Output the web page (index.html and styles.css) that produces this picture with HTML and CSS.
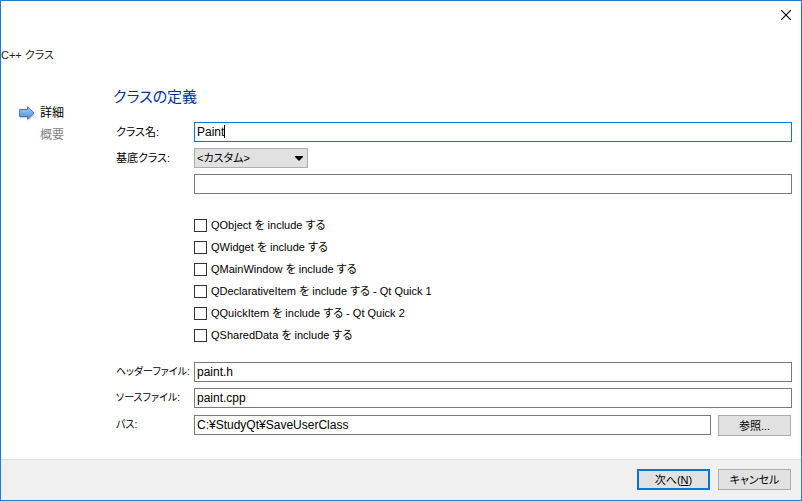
FILE: index.html
```html
<!DOCTYPE html>
<html lang="ja">
  <head>
    <meta charset="UTF-8" />
    <meta name="viewport" content="width=device-width, initial-scale=1.0" />
    <title>C++ クラス</title>
    <link rel="stylesheet" href="styles.css">
  </head>
  <body>
    <form class="wizard">
      <header class="titleBar">
        <button type="button" class="closeBtn" aria-label="閉じる">
          <svg width="10" height="10" viewBox="0 0 10 10"><path d="M0 0L10 10M10 0L0 10" stroke="#000" stroke-width="1.1" /></svg>
        </button>
      </header>
      <p class="wizardName">C++ クラス</p>

      <div class="content">
        <ol class="steps">
          <li class="step current">
            <svg class="arrow" width="17" height="15" viewBox="0 0 17 15">
              <defs>
                <linearGradient id="arrowFill" x1="0" y1="0" x2="0" y2="1">
                  <stop offset="0" stop-color="#b0d4fa" />
                  <stop offset="1" stop-color="#4289dc" />
                </linearGradient>
              </defs>
              <path d="M2 5H10V2L17 8.500L10 15V12H2Z" fill="#ccc" />
              <path d="M1.500 3.500H9.500V.8L16 7L9.500 13.200V10.500H1.500Z" fill="url(#arrowFill)" stroke="#4b78b5" />
            </svg>
            詳細
          </li>
          <li class="step">概要</li>
        </ol>

        <main class="page">
          <h1 class="heading">クラスの定義</h1>
          <div class="fields">
            <label for="className">クラス名:</label>
            <div class="focusBox">
              <input type="text" id="className" class="text focused" value="Paint" />
              <span class="caret"></span>
            </div>

            <label for="baseClass">基底クラス:</label>
            <div class="selectBox">
              <select id="baseClass" class="select"><option>&lt;カスタム&gt;</option></select>
              <svg class="selectArrow" width="8" height="5" viewBox="0 0 8 5"><path d="M0 0H8V1L4 5L0 1Z" /></svg>
            </div>
            <input type="text" class="text customBase" aria-label="基底クラス名" />
          </div>

          <div class="includes">
            <label class="check"><input type="checkbox" />QObject を include する</label>
            <label class="check"><input type="checkbox" />QWidget を include する</label>
            <label class="check"><input type="checkbox" />QMainWindow を include する</label>
            <label class="check"><input type="checkbox" />QDeclarativeItem を include する - Qt Quick 1</label>
            <label class="check"><input type="checkbox" />QQuickItem を include する - Qt Quick 2</label>
            <label class="check"><input type="checkbox" />QSharedData を include する</label>
          </div>

          <div class="fields files">
            <label for="header">ヘッダーファイル:</label>
            <input type="text" id="header" class="text" value="paint.h" />
            <label for="source">ソースファイル:</label>
            <input type="text" id="source" class="text" value="paint.cpp" />
            <label for="path">パス:</label>
            <div class="pathRow">
              <input type="text" id="path" class="text" value="C:¥StudyQt¥SaveUserClass" />
              <button type="button" class="btn">参照...</button>
            </div>
          </div>
        </main>
      </div>

      <footer class="footer">
        <button type="button" class="btn default">次へ(<u>N</u>)</button>
        <button type="button" class="btn">キャンセル</button>
      </footer>
    </form>
  </body>
</html>
```
FILE: styles.css
```css
* {
  box-sizing: border-box;
}
body {
  margin: 0;
}
body,
input,
select,
button {
  font-family: "Liberation Sans", "Noto Sans CJK JP", sans-serif;
  font-size: 12px;
  line-height: 18px;
  font-feature-settings: "palt";
  color: #000;
}
.wizard {
  display: flex;
  flex-direction: column;
  min-height: 100vh;
  border: 1px solid #1a7fd4;
  background: #fff;
}
.titleBar {
  display: flex;
  justify-content: flex-end;
  padding: 4px 5px;
}
.closeBtn {
  display: flex;
  align-items: center;
  justify-content: center;
  width: 20px;
  height: 20px;
  padding: 0;
  border: none;
  background: none;
}
.wizardName {
  margin: 17px 0 0;
  font-size: 11px;
  color: #222;
}
.content {
  display: flex;
  flex: 1;
  padding: 22px 9px 22px 17px;
}
.steps {
  width: 95px;
  margin: 0;
  padding: 16px 0 0;
  list-style: none;
}
.step {
  display: flex;
  align-items: center;
  height: 22px;
  padding-left: 22px;
  color: #838383;
}
.step.current {
  gap: 5px;
  padding-left: 0;
  color: #000;
}
.page {
  flex: 1;
  min-width: 0;
}
.heading {
  margin: 0 0 14px;
  font-size: 15px;
  font-weight: 400;
  line-height: 22px;
  color: #003399;
}
.fields {
  display: grid;
  grid-template-columns: 78px 1fr;
  row-gap: 6px;
  align-items: center;
  padding-left: 3px;
}
.fields label {
  font-size: 11px;
  white-space: nowrap;
}
.files label {
  font-size: 10px;
}
.text {
  display: block;
  width: 100%;
  height: 20px;
  padding: 0 2px;
  border: 1px solid #7a7a7a;
  border-radius: 0;
  background: #fff;
  outline: none;
}
.text.focused {
  border-color: #0078d7;
}
.focusBox,
.selectBox {
  position: relative;
}
.caret {
  position: absolute;
  top: 3px;
  left: 30px;
  width: 1px;
  height: 13px;
  background: #000;
}
.selectBox {
  width: 114px;
}
.select {
  display: block;
  width: 100%;
  height: 20px;
  padding: 0 2px;
  border: 1px solid #adadad;
  border-radius: 0;
  background: #e1e1e1;
  font-size: 11px;
  appearance: none;
}
.selectArrow {
  position: absolute;
  top: 8px;
  right: 5px;
  pointer-events: none;
}
.customBase {
  grid-column: 2;
}
.includes {
  display: flex;
  flex-direction: column;
  align-items: flex-start;
  padding: 20px 0 16px 81px;
}
.check {
  display: flex;
  align-items: center;
  gap: 4px;
  height: 22px;
  font-size: 11px;
}
.check input {
  width: 13px;
  height: 13px;
  margin: 0;
  border: 1px solid #333;
  background: #fff;
  appearance: none;
}
.check input:checked {
  background: #333;
}
.pathRow {
  display: flex;
  gap: 7px;
  margin: 1px 1px 0 0;
}
.btn {
  flex: none;
  width: 73px;
  height: 21px;
  padding: 0;
  border: 1px solid #adadad;
  background: #e1e1e1;
  font-size: 11px;
}
.btn.default {
  border: 2px solid #0078d7;
  line-height: 16px;
}
.footer {
  display: flex;
  justify-content: flex-end;
  gap: 8px;
  padding: 9px 10px 10px;
  border-top: 1px solid #dfdfdf;
  background: #f0f0f0;
}
```
